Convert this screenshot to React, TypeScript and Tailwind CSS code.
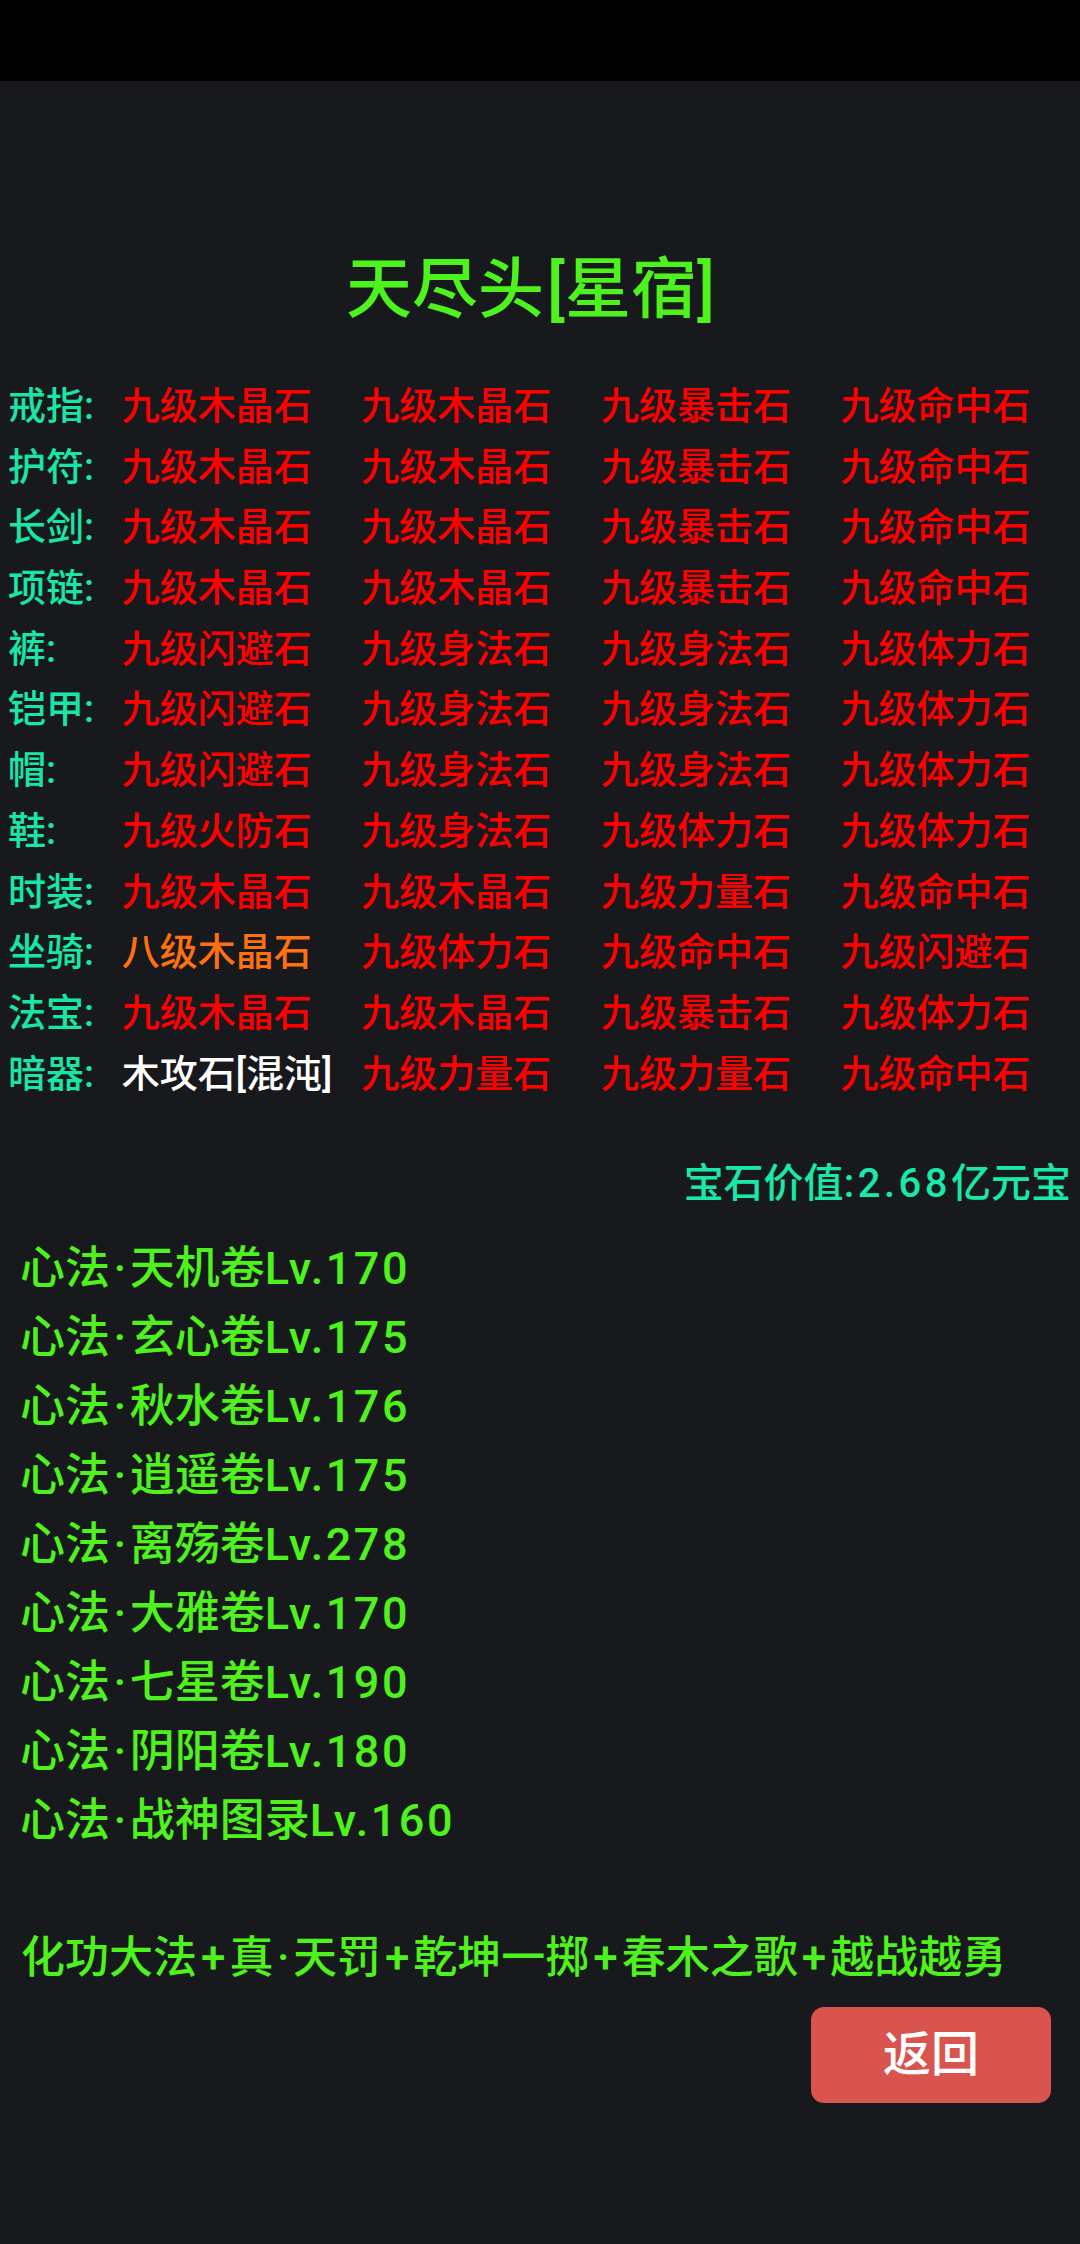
const gemRows: { slot: string; gems: { name: string; tone?: 'orange' | 'white' }[] }[] = [
  { slot: '戒指:', gems: [{ name: '九级木晶石' }, { name: '九级木晶石' }, { name: '九级暴击石' }, { name: '九级命中石' }] },
  { slot: '护符:', gems: [{ name: '九级木晶石' }, { name: '九级木晶石' }, { name: '九级暴击石' }, { name: '九级命中石' }] },
  { slot: '长剑:', gems: [{ name: '九级木晶石' }, { name: '九级木晶石' }, { name: '九级暴击石' }, { name: '九级命中石' }] },
  { slot: '项链:', gems: [{ name: '九级木晶石' }, { name: '九级木晶石' }, { name: '九级暴击石' }, { name: '九级命中石' }] },
  { slot: '裤:', gems: [{ name: '九级闪避石' }, { name: '九级身法石' }, { name: '九级身法石' }, { name: '九级体力石' }] },
  { slot: '铠甲:', gems: [{ name: '九级闪避石' }, { name: '九级身法石' }, { name: '九级身法石' }, { name: '九级体力石' }] },
  { slot: '帽:', gems: [{ name: '九级闪避石' }, { name: '九级身法石' }, { name: '九级身法石' }, { name: '九级体力石' }] },
  { slot: '鞋:', gems: [{ name: '九级火防石' }, { name: '九级身法石' }, { name: '九级体力石' }, { name: '九级体力石' }] },
  { slot: '时装:', gems: [{ name: '九级木晶石' }, { name: '九级木晶石' }, { name: '九级力量石' }, { name: '九级命中石' }] },
  { slot: '坐骑:', gems: [{ name: '八级木晶石', tone: 'orange' }, { name: '九级体力石' }, { name: '九级命中石' }, { name: '九级闪避石' }] },
  { slot: '法宝:', gems: [{ name: '九级木晶石' }, { name: '九级木晶石' }, { name: '九级暴击石' }, { name: '九级体力石' }] },
  { slot: '暗器:', gems: [{ name: '木攻石[混沌]', tone: 'white' }, { name: '九级力量石' }, { name: '九级力量石' }, { name: '九级命中石' }] },
];

const xinfa = [
  { name: '天机卷', lv: 'Lv.170' },
  { name: '玄心卷', lv: 'Lv.175' },
  { name: '秋水卷', lv: 'Lv.176' },
  { name: '逍遥卷', lv: 'Lv.175' },
  { name: '离殇卷', lv: 'Lv.278' },
  { name: '大雅卷', lv: 'Lv.170' },
  { name: '七星卷', lv: 'Lv.190' },
  { name: '阴阳卷', lv: 'Lv.180' },
  { name: '战神图录', lv: 'Lv.160' },
];

const skills = ['化功大法', '真·天罚', '乾坤一掷', '春木之歌', '越战越勇'];

function toneClass(tone?: 'orange' | 'white') {
  if (tone === 'orange') return 'text-[#ff7010]';
  if (tone === 'white') return 'text-white';
  return 'text-[#ff0000]';
}

function Dotted({ text }: { text: string }) {
  const parts = text.split('·');
  return (
    <>
      {parts.map((p, i) => (
        <span key={i}>
          {i > 0 && <span className="mx-[3.5px]">·</span>}
          {p}
        </span>
      ))}
    </>
  );
}

export default function App() {
  return (
    <div
      className="w-[1080px] min-h-[2244px] bg-[#18191d] font-medium"
      style={{ fontFamily: 'Roboto, "Noto Sans CJK SC", sans-serif' }}
    >
      <div className="h-[81px] bg-black" />
      <div className="h-[125px] bg-[#17181c]" />

      <h1 className="pt-[44px] pr-[22px] text-center text-[66px] leading-[80px] font-medium text-[#4ef21c]">
        天尽头<span className="ml-[3px]">[</span>星宿<span className="mr-[-3px]">]</span>
      </h1>

      <div className="mt-[46px] pl-[8px]">
        {gemRows.map((row) => (
          <div key={row.slot} className="flex h-[60.7px] items-center text-[38px] leading-[60.7px] whitespace-nowrap">
            <span className="w-[114px] text-[#19e6a6]">{row.slot}</span>
            {row.gems.map((g, i) => (
              <span key={i} className={`w-[240px] ${toneClass(g.tone)}`}>
                {g.name}
              </span>
            ))}
          </div>
        ))}
      </div>

      <div className="mt-[52px] pr-[9px] text-right text-[40px] leading-[56px] text-[#19e8a8]">
        宝石价值<span className="tracking-[3.5px]">:2.68</span>亿元宝
      </div>

      <ul className="mt-[22px] pl-[20px]">
        {xinfa.map((x) => (
          <li key={x.name} className="text-[45px] leading-[69px] text-[#4ef21c]">
            心法<span className="mx-[3.5px]">·</span>
            {x.name}
            <span className="tracking-[2.5px]">{x.lv}</span>
          </li>
        ))}
      </ul>

      <p className="mt-[73px] pl-[21px] text-[44px] leading-[60px] text-[#4ef21c] whitespace-nowrap">
        {skills.map((s, i) => (
          <span key={s}>
            {i > 0 && <span className="mx-[4px]">+</span>}
            <Dotted text={s} />
          </span>
        ))}
      </p>

      <div className="mt-[19px] flex justify-end pr-[29px]">
        <button className="flex h-[96px] w-[240px] items-center justify-center rounded-[13px] bg-[#d9534f] text-[48px] text-white">
          返回
        </button>
      </div>
    </div>
  );
}
